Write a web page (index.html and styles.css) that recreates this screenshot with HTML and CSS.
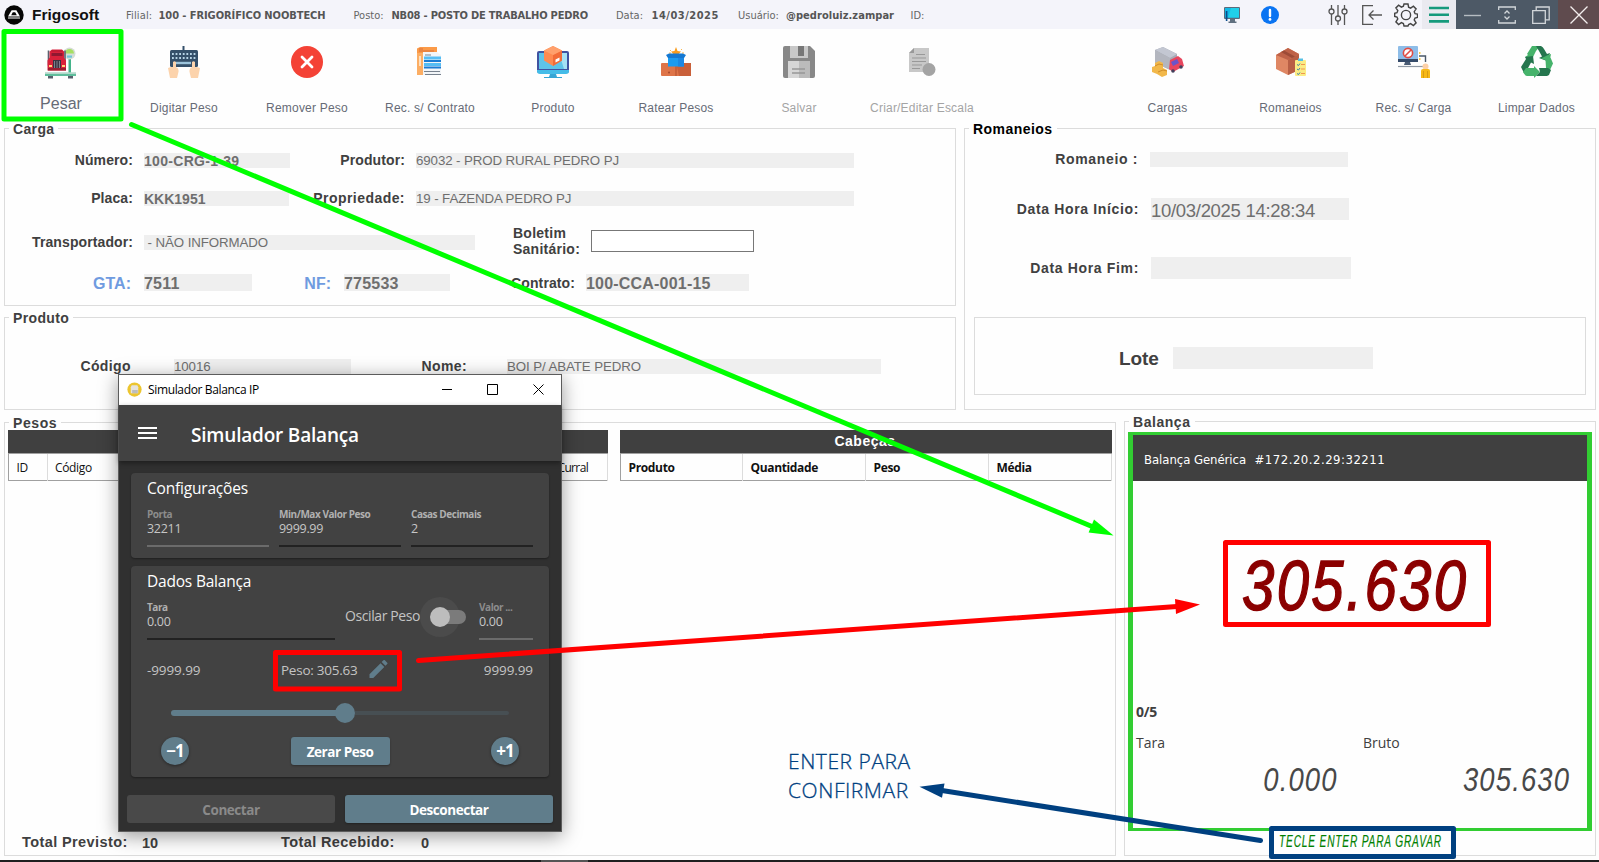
FILE: index.html
```html
<!DOCTYPE html>
<html lang="pt-BR">
<head>
<meta charset="utf-8">
<title>Frigosoft</title>
<link rel="stylesheet" href="styles.css">
</head>
<body>
<div class="app">
  <header class="topbar">
    <svg class="logo" viewBox="0 0 20 20"><circle cx="10" cy="10" r="9.7" fill="#050505"/><path d="M7.6 5.2h4.8l3.6 6.2v2.2H4v-2.2z" fill="#fff"/><path d="M8.8 7.2h2.4l1.6 3H7.2z" fill="#050505"/><path d="M4 12h12" stroke="#050505" stroke-width="1"/></svg>
    <span class="brand">Frigosoft</span>
    <span class="k k-filial">Filial:</span><b class="v v-filial">100 - FRIGORÍFICO NOOBTECH</b>
    <span class="k k-posto">Posto:</span><b class="v v-posto">NB08 - POSTO DE TRABALHO PEDRO</b>
    <span class="k k-data">Data:</span><b class="v v-data">14/03/2025</b>
    <span class="k k-user">Usuário:</span><b class="v v-user">@pedroluiz.zampar</b>
    <span class="k">ID:</span>
    <div class="topicons">
      <svg class="i-mon" viewBox="0 0 18 18"><rect x="1" y="1" width="16" height="12" rx="1" fill="#5a6b7c"/><rect x="2" y="2" width="14" height="9.6" fill="#12b9e6"/><path d="M8 2h8v9.6H5z" fill="#20d0ea"/><path d="M3.600 5v10" stroke="#0a4c8c" stroke-width="1.600"/><path d="M7 13h5v2.400h1.500V17h-8v-1.600H7z" fill="#607080"/></svg>
      <svg class="i-info" viewBox="0 0 18 18"><circle cx="9" cy="9" r="9" fill="#0a74f2"/><path d="M9 4v6" stroke="#fff" stroke-width="2.400" stroke-linecap="round"/><circle cx="9" cy="13.400" r="1.400" fill="#fff"/></svg>
      <svg class="i-sl" viewBox="0 0 20 20" fill="none" stroke="#555" stroke-width="1.300"><path d="M3.500 0v4M3.500 9v11M10 0v11M10 16v4M16.500 0v4M16.500 9v11"/><circle cx="3.500" cy="6.500" r="2.500"/><circle cx="10" cy="13.500" r="2.500"/><circle cx="16.500" cy="6.500" r="2.500"/></svg>
      <svg class="i-ex" viewBox="0 0 22 20" fill="none" stroke="#555" stroke-width="1.300"><path d="M12 .7H1.700v18.600H12M21 10H8M12.500 5.500 8 10l4.500 4.500"/></svg>
      <svg class="i-gear" viewBox="0 0 24 24" fill="none" stroke="#444" stroke-width="1.400"><circle cx="12" cy="12" r="4.600"/><path d="M10 1h4l.6 3.200 2 .9 2.800-1.900 2.700 2.700-1.900 2.800.9 2 2.400.4v3.300l-2.500.6-.8 2 1.900 2.800-2.700 2.700-2.800-1.900-2 .9L14 23h-4l-.6-2.500-2-.9-2.800 1.900L1.900 18.800l1.900-2.800-.8-2L.7 13.500v-3.300L3 9.700l.8-2-1.900-2.800 2.700-2.700 2.800 1.900 2-.9z"/></svg>
      <span class="cell menu"><svg viewBox="0 0 20 18"><path d="M0 2h20M0 8.700h20M0 15.400h20" stroke="#159a7c" stroke-width="2.600"/></svg></span>
      <span class="cell win"><svg viewBox="0 0 18 18"><path d="M0 9.500h17" stroke="#b6bcc2" stroke-width="1.400"/></svg></span>
      <span class="cell win"><svg viewBox="0 0 18 18" fill="none" stroke="#d2d6da" stroke-width="1.300"><path d="M.7 4V1h16.600v3M.7 14v3h16.600v-3M6.500 7.500 9 5l2.500 2.500M6.500 10.500 9 13l2.500-2.500"/></svg></span>
      <span class="cell win"><svg viewBox="0 0 18 18" fill="none" stroke="#d2d6da" stroke-width="1.300"><path d="M.7 4.700h12.600v12.600H.7zM4.200 4.500V1h13v12.800h-3.500"/></svg></span>
      <span class="cell close"><svg viewBox="0 0 18 18"><path d="M.5.5l17 17M17.500.5l-17 17" stroke="#f4eeee" stroke-width="1.300"/></svg></span>
    </div>
  </header>

  <nav class="toolbar">
    <div class="tools left">
      <div class="tool big"><svg viewBox="0 0 32 32"><rect x="23.500" y="10" width="2.500" height="17" fill="#43b38a"/><circle cx="24.500" cy="6.500" r="6" fill="#d6ddd6"/><path d="M20 6.500a4.500 4.500 0 0 1 9 0z" fill="#a6df62"/><path d="M22 8.500h5v2.200h-5z" fill="#6cc8d8"/><path d="M3.500 3.500v15M20 3.500v14" stroke="#5b606e" stroke-width="1.600"/><path d="M7 2.500h10l2 2v6l2 3v10H2.500v-10l2-3v-6z" fill="#d8213a"/><path d="M6.500 6h11v3h-11z" fill="#8e1830"/><path d="M6.500 4h11" stroke="#b5162e"/><path d="M8 13h8v9H8z" fill="#3b3442"/><path d="M9.500 14v8M12 14v8M14.500 14v8" stroke="#8f93a0" stroke-width=".8"/><path d="M3 21h18v2.500H3z" fill="#9a1c30"/><path d="M4 18h3v2H4zM17 18h3v2h-3z" fill="#ffd27a"/><path d="M0 25.500h31V29H0z" fill="#5fbd9c"/><path d="M0 25.500h31v1.200H0z" fill="#d8e4de"/><path d="M3 29h5v2.500H3zM23 29h5v2.500h-5z" fill="#57606c"/></svg><span>Pesar</span></div>
      <div class="tool"><svg viewBox="0 0 32 32"><path d="M15.500 0v5" stroke="#35506a" stroke-width="2"/><rect x="2" y="4" width="28" height="17" rx="1.500" fill="#35506a"/><path d="M4 8h25M4 12h25" stroke="#b8d4e6" stroke-width="1.800" stroke-dasharray="1.800 1.800"/><path d="M8 17h15" stroke="#9cc4dc" stroke-width="2.400"/><path d="M0 22l3-1h2v-5q1.500-1.500 3 0v5l2 1.500q1.500 3 0 5.500l-1 4H2l-1-5zM32 22l-3-1h-2v-5q-1.500-1.500-3 0v5l-2 1.500q-1.500 3 0 5.500l1 4h7l1-5z" fill="#fcd3ac"/></svg><span>Digitar Peso</span></div>
      <div class="tool"><svg viewBox="0 0 32 32"><circle cx="16" cy="16" r="16" fill="#f44236"/><path d="M11 11l10 10M21 11L11 21" stroke="#fff" stroke-width="2.800" stroke-linecap="round"/></svg><span>Remover Peso</span></div>
      <div class="tool"><svg viewBox="0 0 32 32"><path d="M3 2.500 6 1h17v25H3z" fill="#fb9a48"/><path d="M5 5h15M5 3h4" stroke="#d9713a" stroke-width="1"/><path d="M3 7h9v22H3z" fill="#fcae64"/><path d="M9 6h14l4 3v20H9z" fill="#f2f5f8"/><path d="M11 9h6M11 28.500h16M10 25.500h16" stroke="#77818d" stroke-width="1"/><path d="M10 12h17M10 18.500h17" stroke="#55bdf4" stroke-width="2.800"/><path d="M10 15h17M10 21.500h17" stroke="#1a7cd4" stroke-width="2"/><path d="M6 10v10" stroke="#fde0c0" stroke-width="2"/></svg><span>Rec. s/ Contrato</span></div>
      <div class="tool"><svg viewBox="0 0 32 32"><rect x="0" y="5" width="32" height="22" rx="2" fill="#4052a0"/><rect x="2" y="7" width="28" height="16" fill="#5fc3e8"/><path d="M22 7h8v16h-3z" fill="#a5e0f4"/><path d="M0 24h32v1q0 3-3 3H3q-3 0-3-3z" fill="#44bce8"/><path d="M13 28h6l1 3h5v1H7v-1h5z" fill="#35a5d5"/><path d="M16 0l9 4.500v10L16 20l-9-5.500v-10z" fill="#ff8a50"/><path d="M16 9l9-4.500v10L16 20z" fill="#f26c38"/><path d="M7 4.500L16 0l9 4.500L16 9z" fill="#ffa06c"/><path d="M18.500 13.500l4-2v3l-4 2z" fill="#fff"/></svg><span>Produto</span></div>
      <div class="tool"><svg viewBox="0 0 32 32"><path d="M16 1l1.500 4 3.500.5-2.500 2.700.5 3.800h-6l.5-3.800L11 5.500l3.500-.5z" fill="#f99b1c"/><path d="M10 4l1 1M21 4l1-1M9 7h2M22 7h2" stroke="#f9b74c"/><rect x="1" y="17" width="30" height="13" rx="1" fill="#de7448"/><path d="M16 17h15v13H19z" fill="#c9603a"/><path d="M16 18v12" stroke="#b34e2c"/><path d="M8 11h16v9.500H8z" fill="#1b9bf0"/><path d="M6 9l3-1.500h14L26 9l-2 3H8z" fill="#1478d2"/><path d="M18 12h6v8.500h-6z" fill="#1a88e4"/><circle cx="9" cy="26.500" r="1" fill="#a44a2e"/></svg><span>Ratear Pesos</span></div>
      <div class="tool off"><svg viewBox="0 0 32 32"><path d="M2 0h25l5 5v25q0 2-2 2H2q-2 0-2-2V2q0-2 2-2z" fill="#888"/><path d="M7 0h18v12H7z" fill="#c8c8c8"/><path d="M15 0h6v10h-6z" fill="#777"/><path d="M5 15h22v17H5z" fill="#d6d6d6"/><path d="M16 15h11v17H16z" fill="#bbb"/><path d="M9 23h13M9 27h13" stroke="#989898" stroke-width="1.300"/></svg><span>Salvar</span></div>
      <div class="tool off"><svg viewBox="0 0 32 32"><path d="M8 2h15v24H3V7z" fill="#c8c8c8"/><path d="M3 7l5-5v5z" fill="#999"/><path d="M10 8.500h9M6 12h14M6 15.500h14M6 19h10M6 22.500h8" stroke="#999" stroke-width="1"/><circle cx="23" cy="23.500" r="6.500" fill="#a4a4a4"/></svg><span>Criar/Editar Escala</span></div>
    </div>
    <div class="tools">
      <div class="tool"><svg viewBox="0 0 32 32"><path d="M3 4l8-3 14 7v12l-6 4L3 17z" fill="#a7abb6"/><path d="M3 4l8-3 14 7-7 4z" fill="#c3c7d2"/><path d="M3 4l15 8v12L3 17z" fill="#b3b6bf"/><path d="M18 14l8-4 4 3 2 7-11 6-4-3z" fill="#e8465e"/><path d="M19 16l6-3 2 4-6 3z" fill="#6b54c8"/><circle cx="21" cy="25" r="1.800" fill="#43405c"/><circle cx="29" cy="21" r="1.800" fill="#43405c"/><path d="M3 17l4-2 4 2v5l4 2v5l-5 2-5-3-5-2v-5l3-1z" fill="#f2b84a"/><path d="M3 20l4-2 4 1M6 26l5-2 4 1" stroke="#cf8d2c" fill="none"/></svg><span>Cargas</span></div>
      <div class="tool"><svg viewBox="0 0 32 32"><path d="M1 9l12-7 11 6v16l-11 5-12-6z" fill="#df8764"/><path d="M1 9l12-7 11 6-11 6z" fill="#bf6248"/><path d="M13 14l11-6v16l-11 5z" fill="#b85f45"/><path d="M6 6l11 6 3-1.500L9 4.500z" fill="#9d4b37"/><rect x="20" y="14" width="11" height="16" rx="1" fill="#fbec85"/><path d="M23 12.500h5v2.500h-5z" fill="#55c0e4"/><path d="M22 18.500l1.500 1 1.500-2M22 23l1.500 1 1.500-2M22 27.500l1.500 1 1.500-2" stroke="#3b82a8" fill="none"/><path d="M26 18.500h4M26 23h4M26 27.500h4" stroke="#ef9850"/></svg><span>Romaneios</span></div>
      <div class="tool"><svg viewBox="0 0 32 32"><rect x="0" y="0" width="20" height="16" rx="1" fill="#8ebde8"/><path d="M0 13h20v3H0z" fill="#354b6a"/><path d="M7 16h5l1 3H6z" fill="#4a5c75"/><path d="M0 20.500h25" stroke="#8f99a5" stroke-width="1.200"/><circle cx="10" cy="7" r="4.600" fill="#fff" stroke="#e14c43" stroke-width="1.600"/><path d="M7 10l6-6" stroke="#e14c43" stroke-width="1.600"/><path d="M21 10h6.500v6" stroke="#4a5868" stroke-width="1.400" fill="none"/><path d="M21 7h1.500M21 13h1.500" stroke="#f5b916" stroke-width="1.500"/><circle cx="27.500" cy="20.500" r="3" fill="#fcd0a8"/><path d="M23 32v-7q0-2 2-2h5q2 0 2 2v7z" fill="#f7b916"/><path d="M25.500 25v7M29.500 25v7" stroke="#d19410" stroke-width=".8"/></svg><span>Rec. s/ Carga</span></div>
      <div class="tool"><svg viewBox="0 0 32 32"><path d="M11 0h8l-4 5-4 8-2-1-5-1 3-2-1-1z" fill="#46b36b"/><path d="M15 0h5q2 1 3 3l3 5 3-1-3 8-8-3 3-1.500-3-5.500z" fill="#25764e"/><path d="M4 11l8-1 1 8-3-1.500L6.500 23 3 27 0 21l5-8z" fill="#25764e"/><path d="M24.500 14l5-2.500 2.500 6-4 8.500-3-4.500z" fill="#46b36b"/><path d="M27 9l3-1-1.500 7.500-8.500-3 3-1.500z" fill="#46b36b"/><path d="M2 26l3-4h8v-2l6 6-6 6v-2H6q-2 0-4-4z" fill="#46b36b"/><path d="M18 22h9l3 2-2 5-2 1H15l4-4z" fill="#25764e"/></svg><span>Limpar Dados</span></div>
    </div>
  </nav>

  <main>
    <div class="upper">
      <div class="leftcol">
        <section class="group carga">
          <h2 class="legend">Carga</h2>
          <div class="row r1"><label>Número:</label><span class="f b">100-CRG-1-39</span><label>Produtor:</label><span class="f wide">69032 - PROD RURAL PEDRO PJ</span></div>
          <div class="row r2"><label>Placa:</label><span class="f b plate">KKK1951</span><label>Propriedade:</label><span class="f wide">19 - FAZENDA PEDRO PJ</span></div>
          <div class="row r3"><label>Transportador:</label><span class="f transp">&nbsp;- NÃO INFORMADO</span><label class="bol">Boletim<br>Sanitário:</label><input class="inp" type="text"></div>
          <div class="row r4"><label class="lk">GTA:</label><span class="f t b">7511</span><label class="lk">NF:</label><span class="f t b">775533</span><label>Contrato:</label><span class="f t b">100-CCA-001-15</span></div>
        </section>
        <section class="group produto">
          <h2 class="legend">Produto</h2>
          <div class="row rp"><label>Código</label><span class="f">10016</span><label>Nome:</label><span class="f">BOI P/ ABATE PEDRO</span></div>
        </section>
      </div>
      <section class="group romaneios">
        <h2 class="legend black">Romaneios</h2>
        <div class="row q1"><label>Romaneio :</label><span class="f"></span></div>
        <div class="row q2"><label>Data Hora Início:</label><span class="f dt">10/03/2025 14:28:34</span></div>
        <div class="row q3"><label>Data Hora Fim:</label><span class="f dt"></span></div>
        <div class="lote"><label>Lote</label><span class="f dt"></span></div>
      </section>
    </div>

    <div class="lower">
      <section class="group pesos">
        <h2 class="legend">Pesos</h2>
        <div class="tables">
          <div class="tbl t1"><div class="cap"></div><div class="hd"><span>ID</span><span>Código</span><span>Curral</span></div></div>
          <div class="tbl t2"><div class="cap">Cabeças</div><div class="hd"><b>Produto</b><b>Quantidade</b><b>Peso</b><b>Média</b></div></div>
        </div>
        <div class="totals"><span class="tl">Total Previsto:</span><span class="tv">10</span><span class="tl">Total Recebido:</span><span class="tv">0</span></div>
      </section>
      <section class="group balanca">
        <h2 class="legend">Balança</h2>
        <div class="scale">
          <div class="shead"><span>Balança Genérica</span><span class="ip">#172.20.2.29:32211</span></div>
          <div class="display"><span>305.630</span></div>
          <div class="count">0/5</div>
          <div class="pair"><span>Tara</span><span>Bruto</span></div>
          <div class="nums"><span>0.000</span><span>305.630</span></div>
        </div>
        <div class="hint"><span>TECLE ENTER PARA GRAVAR</span></div>
      </section>
    </div>
  </main>
  <footer class="task"><i></i></footer>

  <div class="sim">
    <div class="tbar">
      <svg class="simico" viewBox="0 0 16 16"><circle cx="8" cy="8" r="7.600" fill="#ecc52f"/><path d="M5 3.500h6l1 2V12H4V5.500z" fill="#e6e3dc"/><path d="M5.500 8.500h6V12h-6z" fill="#bdbdbd"/></svg>
      <span class="ttl">Simulador Balanca IP</span>
      <svg class="wb" viewBox="0 0 102 12" fill="none" stroke="#000"><path d="M0 5.500h10M45.500 .5h10v10h-10zM91.500 .5l10 10M101.500 .5l-10 10"/></svg>
    </div>
    <div class="ahead"><svg viewBox="0 0 20 14"><path d="M0 2h19M0 7h19M0 12h19" stroke="#fff" stroke-width="2"/></svg><span>Simulador Balança</span></div>
    <div class="abody">
      <div class="card c1">
        <h3>Configurações</h3>
        <div class="fields">
          <div class="fl dis"><em>Porta</em><span>32211</span></div>
          <div class="fl"><em>Min/Max Valor Peso</em><span>9999.99</span></div>
          <div class="fl"><em>Casas Decimais</em><span>2</span></div>
        </div>
      </div>
      <div class="card c2">
        <h3>Dados Balança</h3>
        <div class="fields f2">
          <div class="fl"><em>Tara</em><span>0.00</span></div>
          <div class="osc"><span>Oscilar Peso</span><svg viewBox="0 0 50 40"><circle cx="20" cy="20" r="20" fill="#4b4b4b"/><rect x="12" y="13" width="34" height="14" rx="7" fill="#7b7b7b"/><circle cx="20" cy="20" r="10" fill="#bdbdbd"/></svg></div>
          <div class="fl dis"><em>Valor ...</em><span>0.00</span></div>
        </div>
        <div class="rng"><span>-9999.99</span><span class="mid">Peso: 305.63<svg viewBox="0 0 18 18"><path d="M0 14.250V18h3.750L14.810 6.940l-3.750-3.750zM17.710 4.040a1 1 0 0 0 0-1.410L15.370.290a1 1 0 0 0-1.410 0l-1.830 1.830 3.750 3.750z" fill="#607d8b"/></svg></span><span>9999.99</span></div>
        <div class="slider"><i class="on"></i><i class="knob"></i><i class="rest"></i></div>
        <div class="btns"><span class="rb">−1</span><span class="zb">Zerar Peso</span><span class="rb">+1</span></div>
      </div>
      <div class="foot"><span class="fb dis">Conectar</span><span class="fb">Desconectar</span></div>
    </div>
  </div>

  <div class="note">ENTER PARA<br>CONFIRMAR</div>
  <svg class="marks" viewBox="0 0 1599 862" fill="none" stroke-width="5" stroke-linecap="round" stroke-linejoin="round">
    <rect x="4" y="31.500" width="117" height="87.500" stroke="#0f0"/>
    <path d="M131.500 124.500L1092 526.500" stroke="#0f0"/><path d="M1113.500 535.500L1094 519.500l-5.400 13z" fill="#0f0"/>
    <rect x="275.500" y="652.500" width="124" height="36.500" stroke="#f00"/>
    <path d="M418.500 660.500L1177 606.500" stroke="#f00"/><path d="M1200 604.500l-25-5.500 1 15z" fill="#f00"/>
    <rect x="1225.500" y="542.500" width="263" height="82" stroke="#f00"/>
    <rect x="1271.500" y="828.500" width="182" height="28" stroke="#004080"/>
    <path d="M1260.500 840.500L942 790.500" stroke="#004080"/><path d="M919.500 786.700l25-3.200-2.500 14.300z" fill="#004080"/>
  </svg>
</div>
</body>
</html>
```

FILE: styles.css
```css
* { box-sizing: border-box; }
body { margin: 0; background: #fefefe; font-family: "Liberation Sans", Arial, sans-serif; color: #404040; }
.app { position: relative; width: 1599px; height: 862px; overflow: hidden; display: flex; flex-direction: column; }
h2, h3 { margin: 0; font-weight: normal; }
svg { display: block; flex: none; }

/* top bar */
.topbar { height: 29px; background: #f4f4fa; display: flex; align-items: center; padding-left: 4px; flex: none; white-space: nowrap; }
.logo { width: 20px; height: 20px; }
.brand { margin-left: 8px; width: 94px; font-weight: bold; font-size: 15.500px; color: #111; flex: none; }
.k, .v { font-family: "DejaVu Sans Condensed", "DejaVu Sans", sans-serif; font-stretch: condensed; font-size: 11px; color: #666; flex: none; padding-top: 1px; }
.v { color: #555; letter-spacing: -.2px; }
.k-filial { width: 32.500px; letter-spacing: .15px; } .v-filial { width: 195px; letter-spacing: -.07px; }
.k-posto { width: 38px; } .v-posto { width: 224.500px; }
.k-data { width: 35.500px; } .v-data { width: 86.500px; letter-spacing: .5px; }
.k-user { width: 48px; } .v-user { width: 124.500px; letter-spacing: .05px; }
.topicons { margin-left: auto; display: flex; align-items: center; height: 29px; }
.i-mon { width: 18px; height: 18px; margin-right: 20px; }
.i-info { width: 18px; height: 18px; margin-right: 49px; }
.i-sl { width: 20px; height: 20px; margin-right: 13px; }
.i-ex { width: 22px; height: 20px; margin-right: 11px; }
.i-gear { width: 24px; height: 24px; margin-right: 4.500px; }
.cell { width: 34px; height: 29px; display: flex; align-items: center; justify-content: center; }
.cell svg { width: 18px; height: 18px; }
.menu { background: #eaeaf0; } .menu svg { width: 20px; }
.win { background: #4d5966; }
.close { width: 41px; background: #5f4b4e; }

/* toolbar */
.toolbar { height: 99px; flex: none; display: flex; justify-content: space-between; padding-right: 1px; }
.tools { display: flex; }
.tools.left { margin-left: -1px; }
.tool { width: 123px; display: flex; flex-direction: column; align-items: center; padding-top: 17px; font-size: 12px; letter-spacing: .2px; color: #666b76; white-space: nowrap; }
.tool svg { width: 32px; height: 32px; }
.tool span { margin-top: 23px; line-height: 14px; }
.left .tool span { padding-left: 1px; }
.tool.big svg { margin-top: 1px; }
.tool.big span { margin-top: 16px; font-size: 16px; line-height: 18px; letter-spacing: 0; }
.off { color: #a4a4a4; }

/* groups */
main { display: flex; flex-direction: column; padding-left: 4px; width: 1596px; height: 732px; flex: none; }
.upper { display: flex; gap: 8px; height: 282px; }
.leftcol { width: 952px; display: flex; flex-direction: column; gap: 11px; }
.group { border: 1px solid #dcdcdc; }
.legend { width: fit-content; height: 18px; margin: -9px 0 0 4px; padding: 0 4px; line-height: 19px; font-size: 14px; font-weight: bold; letter-spacing: .35px; background: #fefefe; }
.legend.black { color: #000; letter-spacing: .45px; }
.carga { height: 178px; } .produto { height: 93px; }
.romaneios { width: 632px; height: 282px; }
.row { display: grid; height: 15px; align-items: center; font-size: 14px; white-space: nowrap; }
label { font-weight: bold; text-align: right; line-height: 15px; color: #404040; font-size: 14px; letter-spacing: .1px; }
.row label { padding-right: 11px; }
.f { background: #efefef; height: 15px; line-height: 16px; color: #6e6e6e; font-size: 13.300px; letter-spacing: -.1px; }
.f.b { font-weight: bold; font-size: 14px; letter-spacing: .3px; }
.f.plate { letter-spacing: 0; }
.r1 { margin-top: 15px; grid-template-columns: 139px 146px 126px 438px; }
.r2 { margin-top: 23px; grid-template-columns: 139px 145px 127px 438px; }
.r2 label:nth-child(3) { letter-spacing: .45px; }
.r3 { margin-top: 20px; height: 32px; grid-template-columns: 139px 331px 116px 163px; grid-template-rows: 32px; }
.row .bol { text-align: left; padding: 0 0 0 38px; line-height: 16px; letter-spacing: .25px; margin-top: -2px; }
.inp { width: 163px; height: 22px; border: 1px solid #777; padding: 0 4px; background: #fff; margin-bottom: 3px; }
.r4 { margin-top: 16px; height: 17px; grid-template-columns: 139px 108px 92px 106px 136px 163px; grid-template-rows: 17px; }
.row .f.t { height: 17px; line-height: 19px; font-size: 16px; letter-spacing: .2px; }
.r4 label { margin-top: 1px; }
.row .lk { color: #6f9be0; font-size: 16px; line-height: 17px; padding-right: 13px; letter-spacing: 0; margin-top: 2px; }
.rp { margin-top: 32px; grid-template-columns: 169px 177px 156px 374px; }
.rp label { padding-right: 43px; letter-spacing: .4px; }
.row.rp label:nth-child(1) { padding-right: 43px; }
.row.rp label:nth-child(3) { padding-right: 40px; }
.q1 { margin-top: 13px; grid-template-columns: 185px 198px; }
.q2 { margin-top: 32px; height: 22px; grid-template-columns: 186px 198px; }
.q3 { margin-top: 37px; height: 22px; grid-template-columns: 186px 200px; }
.romaneios .row label { letter-spacing: .65px; padding-right: 12px; margin-top: 1px; }
.row .f.dt, .lote .f { height: 22px; line-height: 25px; font-size: 18.500px; letter-spacing: -.3px; }
.lote { margin: 38px 9px 0; height: 78px; border: 1px solid #dcdcdc; display: flex; align-items: center; padding-left: 144px; }
.lote label { width: 54px; font-size: 19px; text-align: left; letter-spacing: -.1px; padding-top: 4px; }
.lote .f { width: 200px; margin-top: 3px; }

/* lower area */
.lower { display: flex; gap: 8px; margin-top: 11px; height: 435px; }
.pesos { width: 1112px; margin-top: 1px; display: flex; flex-direction: column; }
.pesos .legend { flex: none; height: 16px; letter-spacing: .6px; }
.tables { display: flex; gap: 12px; padding-left: 3px; }
.tbl .cap { height: 23px; background: #404040; color: #fff; font-weight: bold; font-size: 14px; line-height: 22px; text-align: center; letter-spacing: .5px; }
.t1 { width: 600px; } .t2 { width: 492px; }
.t2 .cap { padding-right: 2px; }
.hd { display: grid; height: 28px; border: solid #a0a0a0; border-width: 1px 0 1px 1px; font-family: "Open Sans", "Noto Sans", sans-serif; font-size: 12px; line-height: 27px; color: #111; }
.hd > * { border-right: 1px solid #dcdcdc; padding-left: 7.500px; letter-spacing: -.35px; }
.t1 .hd { grid-template-columns: 39px 502px 1fr; }
.t1 .hd :nth-child(2) { border: 0; padding-left: 7px; }
.t1 .hd :nth-child(3) { letter-spacing: -.65px; }
.t2 .hd { grid-template-columns: 122px 123px 123px 123px; }
.totals { margin-top: auto; display: flex; height: 22px; padding-left: 17px; font-size: 14.500px; font-weight: bold; line-height: 18px; align-items: flex-start; }
.tl { width: 120px; letter-spacing: .4px; } .tv { width: 139px; padding-top: 1px; }
.totals .tl:nth-child(3) { width: 140px; }
.balanca { width: 472px; display: flex; flex-direction: column; }
.balanca .legend { flex: none; height: 19px; background: none; margin-top: -9px; position: relative; z-index: 1; letter-spacing: .55px; }
.balanca .legend::before { content: ""; position: absolute; z-index: -1; inset: 0 0 8px; background: #fefefe; }
.scale { margin: 0 3px; height: 399px; flex: none; border: solid #32cd32; border-width: 3px 5px; display: flex; flex-direction: column; }
.shead { height: 46px; background: #404040; color: #fff; font-family: "DejaVu Sans Condensed", "Open Sans", sans-serif; font-size: 13px; line-height: 49px; padding-left: 11px; display: flex; gap: 8.500px; }
.shead span { letter-spacing: -.05px; } .shead .ip { letter-spacing: .5px; }
.display { height: 221px; padding: 66px 0 0 109px; font-style: italic; color: #8b0000; font-size: 70px; line-height: 78px; white-space: nowrap; -webkit-text-stroke: 1.400px #8b0000; }
.display span { display: inline-block; transform: scaleX(.83); transform-origin: 0 50%; letter-spacing: 2.800px; }
.count, .pair { font-family: "Open Sans", sans-serif; font-size: 14px; line-height: 20px; padding-left: 3px; }
.count { font-weight: bold; letter-spacing: -.3px; }
.pair { display: grid; grid-template-columns: 227px 1fr; margin-top: 11px; }
.nums { display: grid; grid-template-columns: 205px 1fr; justify-items: end; font-style: italic; font-size: 33px; line-height: 38px; color: #484848; margin-top: 8px; padding-right: 17px; }
.nums span { transform: scaleX(.83); transform-origin: 100% 50%; letter-spacing: 1.400px; }
.hint { height: 24px; padding: 1px 0 0 154px; white-space: nowrap; }
.hint span { display: inline-block; font-style: italic; font-size: 16px; line-height: 20px; color: #008000; transform: scaleX(.635); transform-origin: 0 50%; letter-spacing: 1.300px; -webkit-text-stroke: .2px #008000; }
.task { height: 2px; background: #1f1f1f; flex: none; }
.task i { display: block; margin-left: 541px; width: 47px; height: 2px; background: #555; }

/* simulator window */
.sim { position: absolute; left: 118px; top: 374px; width: 444px; height: 458px; border: 1px solid #5c5c5c; background: #303030; box-shadow: 0 4px 18px rgba(0,0,0,.4); display: flex; flex-direction: column; font-family: "Open Sans", "Noto Sans", sans-serif; }
.tbar { height: 30px; background: #fff; display: flex; align-items: center; padding: 0 0 1px 8px; flex: none; }
.simico { width: 15px; height: 15px; }
.ttl { margin-left: 6px; width: 294px; color: #000; font-size: 12px; letter-spacing: -.35px; white-space: nowrap; }
.wb { width: 102px; height: 12px; }
.ahead { height: 56px; background: #424242; display: flex; align-items: center; padding-left: 19px; box-shadow: 0 2px 5px rgba(0,0,0,.4); flex: none; position: relative; }
.ahead svg { width: 20px; height: 14px; }
.ahead span { margin: 3px 0 0 33px; color: #fff; font-weight: 600; font-size: 19px; letter-spacing: -.2px; }
.abody { padding: 12px 12px 0; display: flex; flex-direction: column; }
.card { background: #424242; border-radius: 4px; padding: 0 16px; box-shadow: 0 1px 2px rgba(0,0,0,.35); }
.card h3 { color: #fff; font-size: 15.500px; line-height: 22px; padding-top: 4px; margin-bottom: 1px; letter-spacing: -.2px; }
.c1 { height: 85px; } .c2 { height: 211px; margin-top: 8px; }
.fields { display: grid; grid-template-columns: repeat(3, 122px); column-gap: 10px; }
.fl { height: 47px; border-bottom: 2px solid #222; display: flex; flex-direction: column; padding-top: 8px; }
.fl em { font-style: normal; font-weight: bold; font-size: 10px; line-height: 13px; color: #b0b0b0; letter-spacing: -.45px; }
.fl span { font-size: 12.500px; line-height: 15px; color: #c6c6c6; letter-spacing: -.3px; }
.fl.dis { border-color: #6b6b6b; } .fl.dis em { color: #8c8c8c; }
.f2 { grid-template-columns: 188px 124px 54px; }
.osc { display: flex; align-items: center; color: #c4c4c4; font-size: 14px; letter-spacing: -.4px; white-space: nowrap; }
.osc span { width: 75px; margin-top: -2px; }
.osc svg { width: 50px; height: 40px; margin-top: 1px; }
.rng { display: grid; grid-template-columns: 134px 1fr auto; align-items: center; height: 20px; margin-top: 20px; color: #c4c4c4; font-size: 13.500px; letter-spacing: -.1px; }
.mid { display: flex; align-items: center; gap: 12px; letter-spacing: -.25px; }
.mid svg { width: 19px; height: 18px; margin-top: -2px; }
.slider { display: flex; align-items: center; height: 20px; margin: 23px 24px 0; }
.slider i { display: block; flex: none; }
.on { width: 174px; height: 6px; background: #607d8b; border-radius: 3px 0 0 3px; }
.rest { width: 154px; height: 4px; background: #474f53; border-radius: 0 2px 2px 0; }
.knob { width: 20px; height: 20px; border-radius: 50%; background: #607d8b; margin-left: -10px; }
.btns { display: flex; justify-content: space-between; align-items: center; margin: 14px 14px 0; height: 28px; }
.rb { width: 28px; height: 28px; border-radius: 50%; background: #607d8b; color: #fff; font-weight: 700; font-size: 17px; line-height: 27px; text-align: center; letter-spacing: -1px; box-shadow: 0 1px 3px rgba(0,0,0,.4); }
.zb, .fb { height: 28px; border-radius: 3px; background: #607d8b; color: #fff; font-weight: 700; font-size: 13.500px; line-height: 30px; text-align: center; letter-spacing: -.45px; box-shadow: 0 1px 2px rgba(0,0,0,.3); }
.zb { width: 99px; }
.foot { display: flex; gap: 10px; margin: 18px -4px 0; }
.fb { width: 208px; }
.fb.dis { background: #494949; color: #8a8a8a; box-shadow: none; }

/* annotations */
.note { position: absolute; left: 788px; top: 747px; font-family: "Open Sans", sans-serif; font-weight: 300; font-size: 21px; line-height: 29px; color: #004080; letter-spacing: .55px; -webkit-text-stroke: .3px #004080; white-space: nowrap; }
.marks { position: absolute; inset: 0; width: 1599px; height: 862px; pointer-events: none; }
.marks path[fill] { stroke: none; }
```
